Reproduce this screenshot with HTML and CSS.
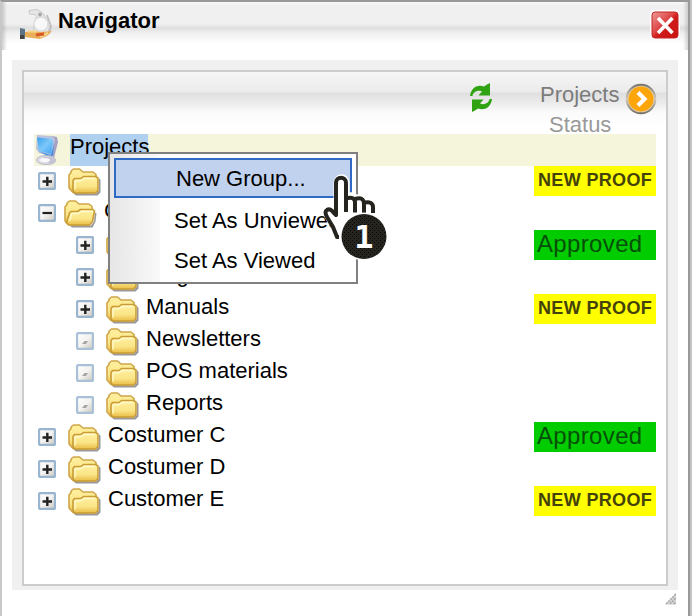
FILE: index.html
```html
<!DOCTYPE html>
<html lang="en">
<head>
<meta charset="utf-8">
<title>Navigator</title>
<link rel="stylesheet" href="styles.css">
</head>
<body>
<svg class="defs" width="0" height="0" aria-hidden="true">
  <defs>
    <linearGradient id="gold" x1="0" y1="0" x2="0" y2="1"><stop offset="0" stop-color="#fff0a0"/><stop offset=".6" stop-color="#fbe588"/><stop offset="1" stop-color="#e9bd45"/></linearGradient>
    <linearGradient id="btn" x1="0" y1="0" x2="1" y2="1"><stop offset="0" stop-color="#fff"/><stop offset=".5" stop-color="#f4f3f1"/><stop offset="1" stop-color="#cbc5bd"/></linearGradient>
    <linearGradient id="red" x1="0" y1="0" x2="1" y2="1"><stop offset="0" stop-color="#ee9a9a"/><stop offset=".42" stop-color="#e04a4a"/><stop offset=".55" stop-color="#d01c1c"/><stop offset="1" stop-color="#cc1212"/></linearGradient>
    <linearGradient id="screen" x1="0" y1="0" x2="1" y2="1"><stop offset="0" stop-color="#3a9ee8"/><stop offset=".5" stop-color="#7cc8fa"/><stop offset="1" stop-color="#3c9ff0"/></linearGradient>
    <linearGradient id="ring" x1="0" y1="0" x2="0" y2="1"><stop offset="0" stop-color="#76706a"/><stop offset=".5" stop-color="#d0c8bc"/><stop offset="1" stop-color="#706a62"/></linearGradient>
    <pattern id="dots" width="4" height="4" patternUnits="userSpaceOnUse"><rect width="4" height="4" fill="#25241f"/><rect width="1" height="1" fill="#080808"/><rect x="2" y="2" width="1" height="1" fill="#080808"/></pattern>
    <symbol id="plus" viewBox="0 0 18 18"><rect x="1" y="1" width="16" height="16" rx="1.500" fill="url(#btn)" stroke="#9ab5d0" stroke-width="2.300"/><path d="M4.500 9.500h9.500M9.300 4.700v9.300" stroke="#222" stroke-width="2.400"/></symbol>
    <symbol id="minus" viewBox="0 0 18 18"><rect x="1" y="1" width="16" height="16" rx="1.500" fill="url(#btn)" stroke="#9ab5d0" stroke-width="2.300"/><path d="M4.500 9h9.500" stroke="#222" stroke-width="2.200"/></symbol>
    <symbol id="leaf" viewBox="0 0 18 18"><rect x="1" y="1" width="16" height="16" rx="1.500" fill="url(#btn)" stroke="#a8c0d8" stroke-width="2.300"/><path d="M6 12l2.500-3H12l-2 3z" fill="#a5a5a5"/></symbol>
    <symbol id="folder" viewBox="0 0 34 30">
      <path d="M6 26l23 .500 3-3V11l1.500 2v12.500L30.500 28.500H9z" fill="#555" opacity=".6"/>
      <path d="M2 21V8l2-2.500V4l2.500-2h6L16 5h10l3 2.500V12l1 11-4 2.500H6z" fill="url(#gold)" stroke="#cfa64a" stroke-width="1.600" stroke-linejoin="round"/>
      <path d="M6 24V13.500l1.500-2h6.500l2.500-2h12l2.500 1.500v12.500l-2.500 2.500H8z" fill="url(#gold)" stroke="#c99c36" stroke-width="1.600" stroke-linejoin="round"/>
      <path d="M8 22.500V14l6-.500 3.500-2H28" fill="none" stroke="#fffbd0" stroke-width="1.300"/>
    </symbol>
    <symbol id="folder-open" viewBox="0 0 34 30">
      <path d="M6 26l22 .500 3-4 1-9 1.500 1-1 8-3 6H9z" fill="#555" opacity=".6"/>
      <path d="M2 22V8l2-2.500V4l2.500-2h6L16 5h10l3 2.500V21l-3 4.500H5z" fill="url(#gold)" stroke="#cfa64a" stroke-width="1.600" stroke-linejoin="round"/>
      <path d="M3.500 23.500L6.500 14 8 12.500h6.500l3-2H30l1.500 1.500-2 10.500-3 3.500H6z" fill="url(#gold)" stroke="#c99c36" stroke-width="1.600" stroke-linejoin="round"/>
      <path d="M6.500 22l2.500-7.500h6l3.500-2H30" fill="none" stroke="#fffbd0" stroke-width="1.300"/>
    </symbol>
  </defs>
</svg>

<div class="window">
  <header class="titlebar">
    <svg class="app-icon" viewBox="0 0 34 34">
      <path d="M9 2.500l8-1 5 3 5 6 2.500 9-2 6-6 3h-5l-3-6 1-8 2-6-2-2-5-.500z" fill="#e6e6e6" stroke="#c8c8c8"/>
      <circle cx="21" cy="16" r="7" fill="#f8f8f8" stroke="#ddd" stroke-width="1.500"/>
      <circle cx="20" cy="6.500" r="2" fill="#aaa"/>
      <path d="M27 7l4 11-2 8" stroke="#bbb" stroke-width="1.500" fill="none"/>
      <path d="M5 24l8-1 8 1 11-1-5 5-7 3-15-2z" fill="#eaae58"/>
      <path d="M8 23.500h9M20 29l8-4" stroke="#f6d58a" stroke-width="2"/>
      <path d="M16 27l8-1" stroke="#d9582a" stroke-width="3"/>
      <path d="M0 20l5 1v10H0z" fill="#5d7284"/><path d="M0 27h4v4H0z" fill="#444"/>
    </svg>
    <h1 class="title">Navigator</h1>
    <svg class="close" viewBox="0 0 30 30"><rect width="30" height="30" rx="4" fill="#fff"/><rect x="2" y="2" width="26" height="26" rx="3" fill="url(#red)" stroke="#c32626"/><path d="M8 8l14.500 15M22.500 8L8 23" stroke="#fff" stroke-width="3.600"/></svg>
  </header>

  <div class="frame">
    <main class="panel">
      <div class="toolbar">
        <svg class="refresh" viewBox="0 0 24 30">
          <path d="M1 13C2 5 8 1 15 3.500L18 1.500l3-1.500v12.500H9.500L13 8.500C9 6.500 4 9 3.500 13z" fill="#2fa312"/>
          <path d="M23 16c-1 8-7 12-14 9.500L6 27.500 3 29V16.500h11.500L11 20.500c4 2 9-.500 9.500-4.500z" fill="#2fa312"/>
        </svg>
        <div class="column-title"><span class="column-main">Projects</span><span class="column-sub">Status</span></div>
        <svg class="next" viewBox="0 0 32 32"><circle cx="16" cy="16" r="15.300" fill="url(#ring)"/><circle cx="16" cy="16" r="13.300" fill="#ddcfae"/><circle cx="16" cy="16" r="12.500" fill="#fca60c"/><path d="M13 9.500l6.500 6.500-6.500 6.500" fill="none" stroke="#fff" stroke-width="4.200"/></svg>
      </div>

      <div class="tree">
        <div class="row row-root">
          <svg class="computer" viewBox="0 0 28 32"><path d="M18 2l5 1 1 5-4 16-6-2z" fill="#a5a2c4"/><path d="M3 1l15 1 3 3-3 17-13-3-3-4z" fill="#b9c3df"/><path d="M3 3.500l15 1.500 1 3-2 12L5 17z" fill="url(#screen)"/><path d="M5 17.500l12 3.500 3-12-1 12-3 2z" fill="#3a8ade"/><ellipse cx="12" cy="26" rx="9.500" ry="4.500" fill="#dcdde5" stroke="#b8b8c8"/><path d="M9 23l9-1 4 6-5 3z" fill="#c3c3d4"/><ellipse cx="11" cy="26" rx="5" ry="2" fill="#f9f9fb"/></svg>
          <span class="label label-selected">Projects</span>
        </div>
        <div class="row"><svg class="toggle"><use href="#plus"/></svg><svg class="folder"><use href="#folder"/></svg><span class="status status-new">NEW PROOF</span></div>
        <div class="row row-open"><svg class="toggle"><use href="#minus"/></svg><svg class="folder"><use href="#folder-open"/></svg><span class="label">Costumer B</span></div>
        <div class="row row-child"><svg class="toggle"><use href="#plus"/></svg><svg class="folder"><use href="#folder"/></svg><span class="status status-ok">Approved</span></div>
        <div class="row row-child"><svg class="toggle"><use href="#plus"/></svg><svg class="folder"><use href="#folder"/></svg><span class="label">Magazines</span></div>
        <div class="row row-child"><svg class="toggle"><use href="#plus"/></svg><svg class="folder"><use href="#folder"/></svg><span class="label">Manuals</span><span class="status status-new">NEW PROOF</span></div>
        <div class="row row-child"><svg class="toggle"><use href="#leaf"/></svg><svg class="folder"><use href="#folder"/></svg><span class="label">Newsletters</span></div>
        <div class="row row-child"><svg class="toggle"><use href="#leaf"/></svg><svg class="folder"><use href="#folder"/></svg><span class="label">POS materials</span></div>
        <div class="row row-child"><svg class="toggle"><use href="#leaf"/></svg><svg class="folder"><use href="#folder"/></svg><span class="label">Reports</span></div>
        <div class="row"><svg class="toggle"><use href="#plus"/></svg><svg class="folder"><use href="#folder"/></svg><span class="label">Costumer C</span><span class="status status-ok">Approved</span></div>
        <div class="row"><svg class="toggle"><use href="#plus"/></svg><svg class="folder"><use href="#folder"/></svg><span class="label">Costumer D</span></div>
        <div class="row"><svg class="toggle"><use href="#plus"/></svg><svg class="folder"><use href="#folder"/></svg><span class="label">Customer E</span><span class="status status-new">NEW PROOF</span></div>
      </div>
    </main>
  </div>
  <svg class="grip" viewBox="0 0 12 12"><path d="M0 11.500L11 0v11.500z" fill="#d4d4d4"/><path d="M1 11L11 1M5 11l6-6M9 11l2-2" stroke="#a4a4a4" stroke-width="1.400" stroke-dasharray="2 1"/></svg>

  <div class="menu">
    <div class="menu-item menu-item-active">New Group...</div>
    <div class="menu-item">Set As Unviewed</div>
    <div class="menu-item">Set As Viewed</div>
  </div>

  <svg class="pointer" viewBox="320 170 70 92">
    <path d="M339 237l-4-10-6-9c-3-5-4-7-1-8 3-2 5 0 7 4l2 3V183c0-7 9-7 9 0v16c3-5 9-4 10 1 3-4 8-3 9 2 4-3 8 0 8 5v14l-16 20z" fill="#fff" stroke="#fff" stroke-width="7" stroke-linejoin="round"/>
    <path d="M339 237h-2l-4-10-6-10c-2-4-2-6 0-7 3-2 5 1 9 5V183c0-7 10-7 10 0v29M346 198.500c6-2 9 0 9 4v10M355 199c6-2 9 0 9 5v9M364 203c5-2 9 0 9 4v6" fill="none" stroke="#25241f" stroke-width="4" stroke-linejoin="round"/>
    <circle cx="364" cy="236.500" r="24" fill="#fff"/>
    <circle cx="364" cy="236.500" r="22.500" fill="url(#dots)"/>
    <text class="pointer-number" x="364" y="248" text-anchor="middle">1</text>
  </svg>
</div>
</body>
</html>
```
FILE: styles.css
```css
* { box-sizing: border-box; }
body {
  margin: 0;
  width: 692px;
  height: 616px;
  overflow: hidden;
  background: #c4c4c4;
  color: #000;
  font: 22px/26px "Liberation Sans", Arial, sans-serif;
}
svg { display: block; flex: none; }
.defs { position: absolute; }
.window {
  position: relative;
  width: 690px;
  height: 616px;
  border: solid #999;
  border-width: 2px 2px 0;
  border-left-color: #c8c8c8;
  background: #fff;
}
.titlebar {
  display: flex;
  height: 58px;
  padding: 6px 6px 0 18px;
  background:
    linear-gradient(90deg, rgba(160,160,160,.5), transparent 5px) 0 0 / 100% 48px no-repeat,
    linear-gradient(270deg, rgba(160,160,160,.45), transparent 5px) 0 0 / 100% 48px no-repeat,
    linear-gradient(#fafafa 0, #f0f0f0 3px, #f0f0f0 22px, #dedede 26px, #f0f0f0 31px, #fff 42px);
}
.app-icon { width: 34px; height: 34px; }
.title { margin: -1px auto 0 4px; font: bold 22px/26px "Liberation Sans", Arial, sans-serif; padding-top: 1px; }
.close { width: 30px; height: 30px; margin: 2px 2px 0 0; }
.frame { width: 666px; height: 530px; margin-left: 10px; padding: 10px 10px 4px; background: #f0f0f0; }
.panel { width: 646px; height: 516px; border: 2px solid #ccc; background: #fff; }
.toolbar {
  display: flex;
  justify-content: flex-end;
  height: 62px;
  padding: 9px 9px 0 0;
  background: linear-gradient(#f6f6f6 0, #ebebeb 20px, #dfdfdf 21px, #ededed 32px, #fafafa 40px, #fff 54px);
}
.refresh { width: 24px; height: 30px; margin: 2px 47px 0 0; }
.column-title { display: flex; flex-direction: column; width: 85px; line-height: 30px; color: #999; margin-top: -1px; }
.column-main { color: #7c7c7c; }
.column-sub { padding-left: 9px; }
.next { width: 32px; height: 32px; margin-top: 2px; }
.tree { margin: 0 10px; }
.row { display: flex; height: 32px; padding-left: 4px; }
.row-root { padding-left: 0; background: #f5f5dc; }
.row-child { padding-left: 42px; }
.computer { width: 28px; height: 32px; margin-right: 8px; }
.toggle { width: 18px; height: 18px; margin: 6px 11px 0 0; }
.folder { width: 34px; height: 30px; margin-top: 1px; }
.row-open .folder { margin-left: -4px; }
.label { padding-left: 7px; white-space: nowrap; }
.label-selected { padding: 0; width: 78px; background: #b0d0f0; }
.status { width: 122px; height: 30px; margin-left: auto; padding-left: 4px; white-space: nowrap; }
.status-new { background: #ff0; color: #44420b; font-weight: bold; font-size: 18px; line-height: 29px; letter-spacing: .35px; }
.status-ok { background: #0c0; color: #075009; padding-left: 3px; font-size: 24px; line-height: 27px; letter-spacing: .35px; }
.grip { width: 12px; height: 12px; margin: 3px 0 0 663px; }
.menu {
  position: absolute;
  left: 106px;
  top: 150px;
  width: 250px;
  height: 132px;
  padding: 4px;
  border: 2px solid #808080;
  background: linear-gradient(90deg, #e6e6e6, #f9f9f9 50px, #fff 50px);
}
.menu-item { height: 40px; padding-left: 60px; line-height: 46px; white-space: nowrap; }
.menu-item-active { border: 2px solid #316ac5; background: #c1d2ee; line-height: 38px; }
.pointer { position: absolute; left: 318px; top: 168px; width: 70px; height: 92px; }
.pointer-number { fill: #fff; font: bold 32px "Noto Sans", "DejaVu Sans Mono", sans-serif; font-family: "DejaVu Sans Mono", monospace; }
```
